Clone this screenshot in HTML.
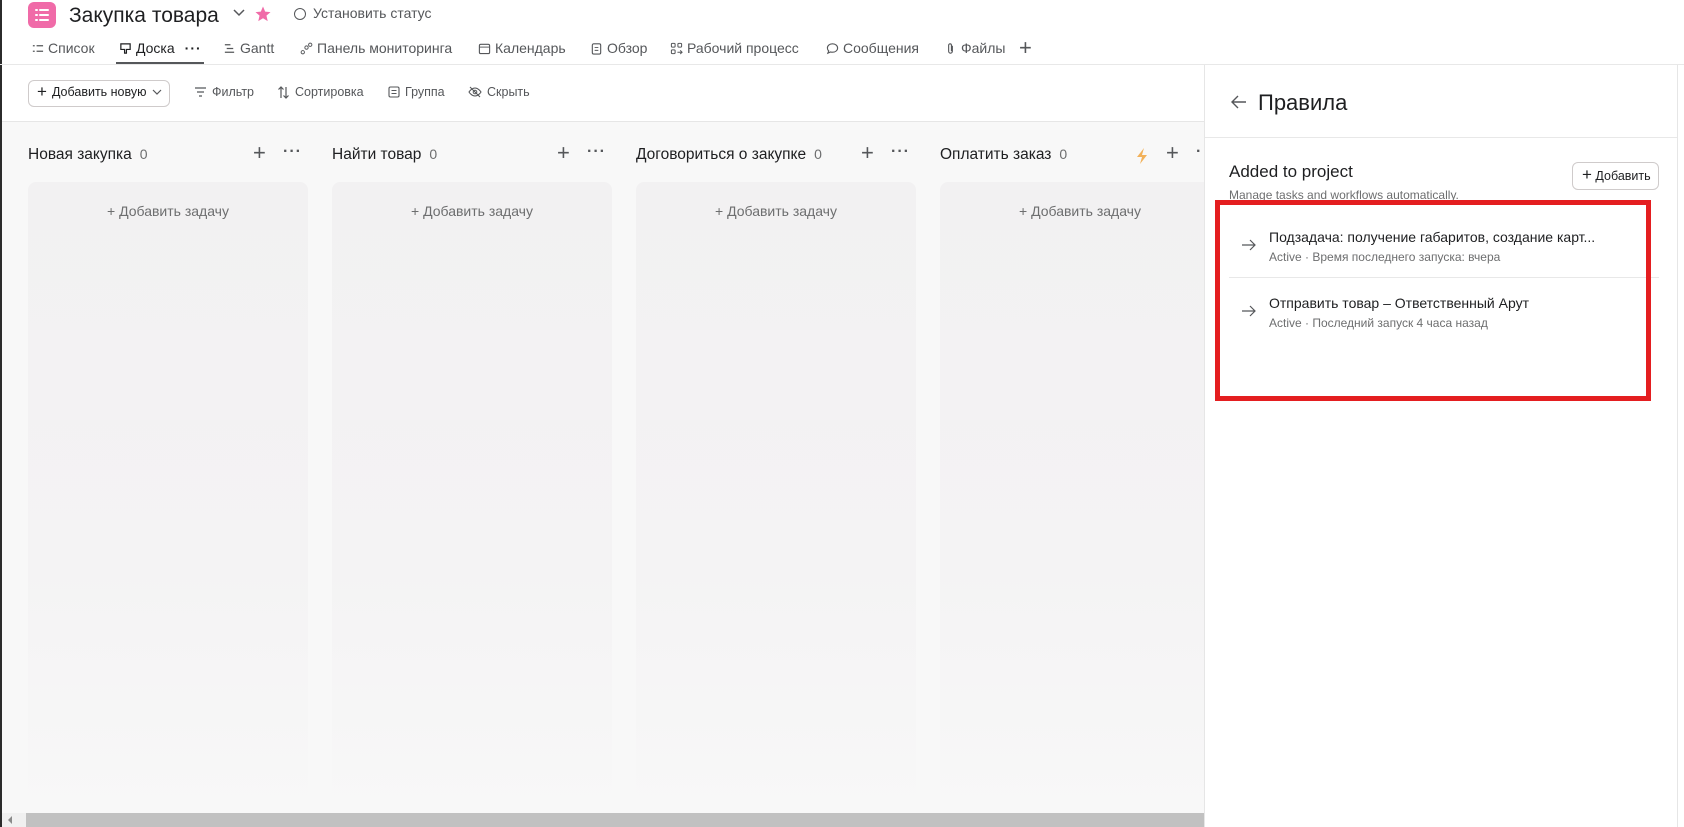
<!DOCTYPE html>
<html><head><meta charset="utf-8"><style>
*{margin:0;padding:0;box-sizing:border-box}
body{width:1684px;height:827px;overflow:hidden;background:#fff;font-family:"Liberation Sans","DejaVu Sans",sans-serif;color:#1e1f21;position:relative}
.a{position:absolute;white-space:nowrap}
.tab{position:absolute;top:40px;font-size:14px;color:#55575a;display:flex;align-items:center;gap:4px}
.tab svg{width:13px;height:13px}
.tb{position:absolute;top:85px;font-size:12.5px;color:#55575a;display:flex;align-items:center;gap:5px}
.ch{position:absolute;top:146px;font-size:15.5px;color:#1e1f21}
.ch span{color:#6d6e6f;font-size:14px;margin-left:8px}
.card{position:absolute;top:182px;width:280px;height:640px;border-radius:8px;background:linear-gradient(#f2f1f2,#f4f3f4 60%,#f8f8f8)}
.card div{text-align:center;margin-top:21px;font-size:14px;color:#6d6e6f}
</style></head><body>
<div class="a" style="left:0;top:0;width:2px;height:827px;background:#2b2b2b"></div>
<div class="a" style="left:28px;top:2px;width:28px;height:26px;border-radius:6px;background:#f06ba8"></div>
<svg class="a" style="left:33px;top:6px" width="18" height="18" viewBox="0 0 18 18"><g stroke="#fff" stroke-width="2" stroke-linecap="round"><path d="M3 4h1M7 4h8M3 9h1M7 9h8M3 14h1M7 14h8"/></g></svg>
<div class="a" style="left:69px;top:4px;font-size:21px;color:#1e1f21">Закупка товара</div>
<svg class="a" style="left:232px;top:8px" width="14" height="10" viewBox="0 0 14 10"><path d="M2 2l5 5 5-5" fill="none" stroke="#55575a" stroke-width="1.5"/></svg>
<svg class="a" style="left:254px;top:5px" width="18" height="18" viewBox="0 0 24 24"><path d="M12 2l2.9 6.9 7.1.6-5.4 4.7 1.7 7.3L12 17.6 5.7 21.5l1.7-7.3L2 9.5l7.1-.6z" fill="#f06ba8"/></svg>
<div class="a" style="left:294px;top:8px;width:12px;height:12px;border:1.3px solid #55575a;border-radius:50%"></div>
<div class="a" style="left:313px;top:5px;font-size:14px;color:#55575a">Установить статус</div>
<div class="tab" style="left:31px"><svg viewBox="0 0 14 14"><path d="M2 4h2M6 4h7M2 10h2M6 10h7" stroke="#55575a" stroke-width="1.4" fill="none"/></svg>Список</div>
<div class="tab" style="left:119px;color:#1e1f21"><svg viewBox="0 0 14 14"><path d="M2 2h10v6H8v4H6V8H2z" stroke="#1e1f21" stroke-width="1.3" fill="none"/></svg>Доска<span style="margin-left:6px;font-weight:bold;letter-spacing:1px">···</span></div>
<div class="a" style="left:116px;top:62px;width:88px;height:2px;background:#55575a"></div>
<div class="tab" style="left:223px"><svg viewBox="0 0 14 14"><path d="M2 3h6M4 7h7M2 11h10" stroke="#55575a" stroke-width="1.4" fill="none"/></svg>Gantt</div>
<div class="tab" style="left:300px"><svg viewBox="0 0 14 14"><circle cx="3" cy="11" r="1.8" fill="none" stroke="#55575a"/><circle cx="7" cy="6" r="1.8" fill="none" stroke="#55575a"/><circle cx="11" cy="3" r="1.8" fill="none" stroke="#55575a"/></svg>Панель мониторинга</div>
<div class="tab" style="left:478px"><svg viewBox="0 0 14 14"><rect x="1.5" y="2.5" width="11" height="10" rx="1.5" fill="none" stroke="#55575a" stroke-width="1.2"/><path d="M1.5 5.5h11" stroke="#55575a"/></svg>Календарь</div>
<div class="tab" style="left:590px"><svg viewBox="0 0 14 14"><rect x="2.5" y="2" width="9" height="11" rx="1.5" fill="none" stroke="#55575a" stroke-width="1.2"/><path d="M5 6h4M5 9h4" stroke="#55575a"/></svg>Обзор</div>
<div class="tab" style="left:670px"><svg viewBox="0 0 14 14"><g fill="none" stroke="#55575a" stroke-width="1.1"><rect x="1.5" y="1.5" width="4" height="4" rx="1"/><rect x="8.5" y="1.5" width="4" height="4" rx="1"/><rect x="1.5" y="8.5" width="4" height="4" rx="1"/><path d="M8 11h5M11 9l2 2-2 2"/></g></svg>Рабочий процесс</div>
<div class="tab" style="left:826px"><svg viewBox="0 0 14 14"><path d="M7 2c3.3 0 5.5 2 5.5 4.5S10.3 11 7 11c-.8 0-1.5-.1-2.2-.3L2 12l.9-2.4C2 8.8 1.5 7.7 1.5 6.5 1.5 4 3.7 2 7 2z" fill="none" stroke="#55575a" stroke-width="1.2"/></svg>Сообщения</div>
<div class="tab" style="left:944px"><svg viewBox="0 0 14 14"><path d="M9 4v6a2 2 0 01-4 0V3.5a1.5 1.5 0 013 0V10" fill="none" stroke="#55575a" stroke-width="1.2"/></svg>Файлы</div>
<div class="a" style="left:1019px;top:35px;font-size:22px;color:#55575a">+</div>
<div class="a" style="left:0;top:64px;width:1684px;height:1px;background:#e8e8e8"></div>
<div class="a" style="left:28px;top:80px;width:142px;height:27px;border:1px solid #cfcbcb;border-radius:6px"></div>
<div class="tb" style="left:37px;color:#1e1f21"><span style="font-size:17px;line-height:12px">+</span>Добавить новую<svg width="10" height="8" viewBox="0 0 10 8"><path d="M1 2l4 4 4-4" fill="none" stroke="#55575a" stroke-width="1.2"/></svg></div>
<div class="tb" style="left:194px"><svg width="13" height="12" viewBox="0 0 13 12"><path d="M1 2h11M3 6h7M5 10h3" stroke="#55575a" stroke-width="1.2"/></svg>Фильтр</div>
<div class="tb" style="left:277px"><svg width="13" height="13" viewBox="0 0 13 13"><path d="M4 12V1M1.5 3.5L4 1l2.5 2.5M9 1v11M6.5 9.5L9 12l2.5-2.5" fill="none" stroke="#55575a" stroke-width="1.2"/></svg>Сортировка</div>
<div class="tb" style="left:388px"><svg width="12" height="12" viewBox="0 0 12 12"><rect x="1" y="1" width="10" height="10" rx="1.5" fill="none" stroke="#55575a" stroke-width="1.1"/><path d="M3.5 4.5h5M3.5 7.5h5" stroke="#55575a"/></svg>Группа</div>
<div class="tb" style="left:468px"><svg width="14" height="12" viewBox="0 0 14 12"><path d="M1 6s2.5-4 6-4 6 4 6 4-2.5 4-6 4-6-4-6-4z" fill="none" stroke="#55575a" stroke-width="1.1"/><circle cx="7" cy="6" r="1.8" fill="none" stroke="#55575a"/><path d="M2 1l10 10" stroke="#55575a" stroke-width="1.1"/></svg>Скрыть</div>
<div class="a" style="left:2px;top:121px;width:1202px;height:692px;background:#f8f8f8;border-top:1px solid #e6e6e6"></div>
<div class="ch a" style="left:28px">Новая закупка<span>0</span></div>
<div class="a" style="left:253px;top:140px;font-size:22px;color:#55575a">+</div>
<div class="a" style="left:283px;top:143px;font-size:16px;color:#55575a;letter-spacing:1px;font-weight:bold">···</div>
<div class="card" style="left:28px"><div>+ Добавить задачу</div></div>
<div class="ch a" style="left:332px">Найти товар<span>0</span></div>
<div class="a" style="left:557px;top:140px;font-size:22px;color:#55575a">+</div>
<div class="a" style="left:587px;top:143px;font-size:16px;color:#55575a;letter-spacing:1px;font-weight:bold">···</div>
<div class="card" style="left:332px"><div>+ Добавить задачу</div></div>
<div class="ch a" style="left:636px">Договориться о закупке<span>0</span></div>
<div class="a" style="left:861px;top:140px;font-size:22px;color:#55575a">+</div>
<div class="a" style="left:891px;top:143px;font-size:16px;color:#55575a;letter-spacing:1px;font-weight:bold">···</div>
<div class="card" style="left:636px"><div>+ Добавить задачу</div></div>
<div class="ch a" style="left:940px">Оплатить заказ<span>0</span></div>
<svg class="a" style="left:1135px;top:147px" width="14" height="18" viewBox="0 0 14 18"><path d="M9 1L2 10h5l-2 7 7-9H7z" fill="#f2b15a"/></svg>
<div class="a" style="left:1166px;top:140px;font-size:22px;color:#55575a">+</div>
<div class="a" style="left:1196px;top:143px;font-size:16px;color:#55575a;font-weight:bold">·</div>
<div class="card" style="left:940px"><div>+ Добавить задачу</div></div>
<div class="a" style="left:2px;top:813px;width:1202px;height:14px;background:#f0f0f0"></div>
<div class="a" style="left:26px;top:813px;width:1178px;height:14px;background:#c1c1c1"></div>
<svg class="a" style="left:6px;top:815px" width="8" height="10" viewBox="0 0 8 10"><path d="M6 1L2 5l4 4z" fill="#8a8a8a"/></svg>
<div class="a" style="left:1204px;top:65px;width:474px;height:762px;background:#fff;border-left:1px solid #e6e6e6;border-right:1px solid #e6e6e6"></div>
<svg class="a" style="left:1230px;top:94px" width="18" height="16" viewBox="0 0 18 16"><path d="M16 8H2M8 2L2 8l6 6" fill="none" stroke="#55575a" stroke-width="1.4"/></svg>
<div class="a" style="left:1258px;top:90px;font-size:22px;color:#1e1f21">Правила</div>
<div class="a" style="left:1205px;top:137px;width:472px;height:1px;background:#e8e8e8"></div>
<div class="a" style="left:1229px;top:162px;font-size:17px;color:#1e1f21">Added to project</div>
<div class="a" style="left:1229px;top:188px;font-size:12px;color:#6d6e6f">Manage tasks and workflows automatically.</div>
<div class="a" style="left:1572px;top:162px;width:87px;height:28px;border:1px solid #cfcbcb;border-radius:6px;font-size:12.5px;color:#1e1f21;padding:6px 0 0 9px"><span style="font-size:17px;line-height:12px">+</span> Добавить</div>
<svg class="a" style="left:1241px;top:238px" width="16" height="14" viewBox="0 0 16 14"><path d="M1 7h13M9 2l5 5-5 5" fill="none" stroke="#55575a" stroke-width="1.2"/></svg>
<div class="a" style="left:1269px;top:229px;font-size:14px;color:#1e1f21">Подзадача: получение габаритов, создание карт...</div>
<div class="a" style="left:1269px;top:250px;font-size:12px;color:#6d6e6f">Active · Время последнего запуска: вчера</div>
<div class="a" style="left:1229px;top:277px;width:430px;height:1px;background:#e8e8e8"></div>
<svg class="a" style="left:1241px;top:304px" width="16" height="14" viewBox="0 0 16 14"><path d="M1 7h13M9 2l5 5-5 5" fill="none" stroke="#55575a" stroke-width="1.2"/></svg>
<div class="a" style="left:1269px;top:295px;font-size:14px;color:#1e1f21">Отправить товар – Ответственный Арут</div>
<div class="a" style="left:1269px;top:316px;font-size:12px;color:#6d6e6f">Active · Последний запуск 4 часа назад</div>
<div class="a" style="left:1215px;top:200px;width:436px;height:201px;border:5px solid #e41e20"></div>
</body></html>
